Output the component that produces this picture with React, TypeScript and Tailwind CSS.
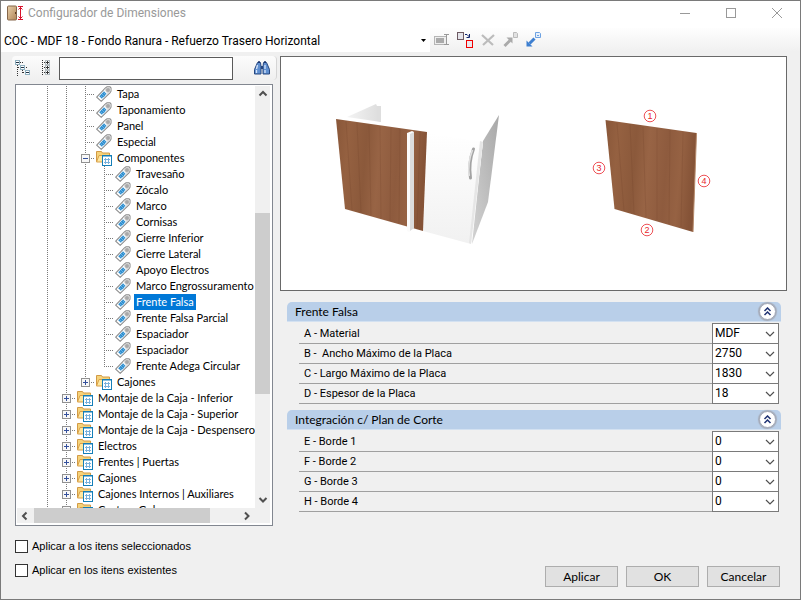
import { useState } from "react";

type Row = {
  label: string;
  level: number;
  kind: "tag" | "folder";
  state?: "open" | "closed";
  last?: boolean;
};

const tag = (label: string, level: number, last = false): Row => ({ label, level, kind: "tag", last });
const folder = (label: string, level: number, state: "open" | "closed" = "closed", last = false): Row => ({
  label,
  level,
  kind: "folder",
  state,
  last,
});

const rows: Row[] = [
  tag("Tapa", 3),
  tag("Taponamiento", 3),
  tag("Panel", 3),
  tag("Especial", 3),
  folder("Componentes", 3, "open"),
  tag("Travesaño", 4),
  tag("Zócalo", 4),
  tag("Marco", 4),
  tag("Cornisas", 4),
  tag("Cierre Inferior", 4),
  tag("Cierre Lateral", 4),
  tag("Apoyo Electros", 4),
  tag("Marco Engrossuramento", 4),
  tag("Frente Falsa", 4),
  tag("Frente Falsa Parcial", 4),
  tag("Espaciador", 4),
  tag("Espaciador", 4),
  tag("Frente Adega Circular", 4, true),
  folder("Cajones", 3, "closed", true),
  folder("Montaje de la Caja - Inferior", 2),
  folder("Montaje de la Caja - Superior", 2),
  folder("Montaje de la Caja - Despensero", 2),
  folder("Electros", 2),
  folder("Frentes | Puertas", 2),
  folder("Cajones", 2),
  folder("Cajones Internos | Auxiliares", 2),
  folder("Costura Gola", 2),
];

const groups = [
  {
    title: "Frente Falsa",
    fields: [
      { label: "A - Material", value: "MDF" },
      { label: "B -  Ancho Máximo de la Placa", value: "2750" },
      { label: "C - Largo Máximo de la Placa", value: "1830" },
      { label: "D - Espesor de la Placa", value: "18" },
    ],
  },
  {
    title: "Integración c/ Plan de Corte",
    fields: [
      { label: "E - Borde 1", value: "0" },
      { label: "F - Borde 2", value: "0" },
      { label: "G - Borde 3", value: "0" },
      { label: "H - Borde 4", value: "0" },
    ],
  },
];

function AppIcon() {
  return (
    <svg width="17" height="16" viewBox="0 0 17 16">
      <defs>
        <linearGradient id="door" x1="0" y1="0" x2="1" y2="1">
          <stop offset="0" stopColor="#e8d0aa" />
          <stop offset="1" stopColor="#b08558" />
        </linearGradient>
      </defs>
      <rect x="0.500" y="1" width="9" height="14" rx="1" fill="url(#door)" stroke="#85664a" />
      <path d="M8.500 7v2" stroke="#5b3d22" />
      <path d="M11 1.500h5M11 14.500h5M13.500 2v12M11.500 4.500l2-2 2 2M11.500 11.500l2 2 2-2" stroke="#d8112b" fill="none" />
    </svg>
  );
}

function TagIcon() {
  return (
    <svg width="16" height="16" viewBox="0 0 16 16" className="shrink-0">
      <path d="M0.700 11.200L9.200 2.200L11 0.900H14L15 2V5.200L13.900 7L5.200 15.300Z" fill="#fff" stroke="#8c8c8c" strokeWidth="1.100" />
      <path d="M8.300 3.500L11 1.500H13.800L14.400 2.400V5L13.400 6.600L11.600 8Z" fill="#d9d9d9" />
      <rect x="11" y="3" width="2" height="2" fill="#fff" stroke="#777" strokeWidth="0.800" />
      <path d="M3.200 10.300L8 5.200L10.700 8L5.900 12.800Z" fill="#2f8fd0" />
      <path d="M4.500 9.500l3 3M6 8l3 3M7.500 6.500l2.600 2.600" stroke="#8cc6ec" strokeWidth="0.600" />
    </svg>
  );
}

function FolderIcon() {
  return (
    <svg width="16" height="16" viewBox="0 0 16 16" className="shrink-0">
      <path d="M0.500 11.500V1.500H5.500L6.500 3H13.500V11.500Z" fill="#f5d37b" stroke="#d29a45" />
      <path d="M0.500 12L3 5.500H14V12Z" fill="#fde7a0" stroke="#d9a04a" />
      <rect x="6.500" y="5.500" width="9" height="10" fill="#fff" stroke="#157fb8" />
      <path d="M6 6h10" stroke="#157fb8" />
      <path d="M8 9.500h6M8 12.500h6M9.500 8v6M12.500 8v6" stroke="#79b1dc" />
    </svg>
  );
}

function Guide({ horizontal = false, half = false }: { horizontal?: boolean; half?: boolean }) {
  return (
    <svg width="19" height="16" viewBox="0 0 19 16" className="shrink-0" shapeRendering="crispEdges">
      <path d={half ? "M9.500 0V9" : "M9.500 0V16"} stroke="#7a7a7a" strokeDasharray="1 1" />
      {horizontal && <path d="M9 8.500H19" stroke="#7a7a7a" strokeDasharray="1 1" />}
    </svg>
  );
}

function Expander({ open, half }: { open: boolean; half: boolean }) {
  return (
    <button type="button" aria-label={open ? "Contraer" : "Expandir"} className="block h-4 w-[19px] shrink-0">
      <svg width="19" height="16" viewBox="0 0 19 16" shapeRendering="crispEdges">
        <path d={half ? "M9.500 0V9" : "M9.500 0V16"} stroke="#7a7a7a" strokeDasharray="1 1" />
        <path d="M9 8.500H19" stroke="#7a7a7a" strokeDasharray="1 1" />
        <rect x="5.500" y="4.500" width="8" height="8" fill="#f8f8f8" stroke="#919191" />
        <path d={open ? "M7 8.500H12" : "M7 8.500H12M9.500 6V11"} stroke="#34509c" />
      </svg>
    </button>
  );
}

function TreeRow({ row, selected, onSelect }: { row: Row; selected: boolean; onSelect: () => void }) {
  const plain = Array.from({ length: row.level - 1 });
  return (
    <li role="treeitem" aria-selected={selected} className="flex h-4 items-center">
      {plain.map((_, i) => (
        <Guide key={i} />
      ))}
      {row.kind === "folder" ? (
        <Expander open={row.state === "open"} half={!!row.last} />
      ) : (
        <Guide horizontal half={!!row.last} />
      )}
      <span className="ml-px flex">{row.kind === "tag" ? <TagIcon /> : <FolderIcon />}</span>
      <button
        type="button"
        onClick={onSelect}
        className={
          "ml-[3px] h-4 px-0.5 leading-4 whitespace-nowrap " + (selected ? "bg-[#0078d7] text-white" : "text-black")
        }
      >
        {row.label}
      </button>
    </li>
  );
}

function ScrollArrow({ dir }: { dir: "up" | "down" | "left" | "right" }) {
  const d = {
    up: "M4.500 9.500L8 6L11.500 9.500",
    down: "M4.500 6L8 9.500L11.500 6",
    left: "M9.500 4.500L6 8L9.500 11.500",
    right: "M6 4.500L9.500 8L6 11.500",
  }[dir];
  return (
    <button type="button" aria-label={dir} className="block size-4 shrink-0">
      <svg width="16" height="16" viewBox="0 0 16 16">
        <path d={d} fill="none" stroke="#505050" strokeWidth="2" />
      </svg>
    </button>
  );
}

function Tree() {
  const [selected, setSelected] = useState(13);
  return (
    <div className="grid min-h-0 flex-1 grid-cols-[minmax(0,1fr)_15px] grid-rows-[minmax(0,1fr)_15px] border border-[#828790] bg-white p-px pr-0.5 pb-0.5">
      <ul role="tree" className="overflow-hidden pl-[21px] font-[Lato,sans-serif]">
        {rows.map((row, i) => (
          <TreeRow key={i} row={row} selected={i === selected} onSelect={() => setSelected(i)} />
        ))}
      </ul>
      <div className="flex flex-col items-center bg-[#f0f0f0]">
        <ScrollArrow dir="up" />
        <div className="flex w-full flex-1 flex-col">
          <div className="flex-[111]" />
          <div className="flex-[180] bg-[#cdcdcd]" />
          <div className="flex-[98]" />
        </div>
        <ScrollArrow dir="down" />
      </div>
      <div className="flex items-center bg-[#f0f0f0]">
        <ScrollArrow dir="left" />
        <div className="flex h-full flex-1">
          <div className="flex-[1]" />
          <div className="flex-[175] bg-[#cdcdcd]" />
          <div className="flex-[29]" />
        </div>
        <ScrollArrow dir="right" />
      </div>
      <div className="bg-[#f0f0f0]" />
    </div>
  );
}

function SearchBar() {
  return (
    <div className="-ml-[3px] flex h-6 items-center rounded-sm border-r border-[#d5d5d5] bg-linear-to-b from-[#fcfcfc] to-[#f0f0f0] pl-[3px]">
      <button type="button" aria-label="Contraer todo" className="size-4">
        <svg width="16" height="16" viewBox="0 0 16 16" shapeRendering="crispEdges">
          <path d="M2.500 5V16M7.500 10V14M5 2.500H8M3 7.500H5M9 7.500H12M8 12.500H10" stroke="#333" strokeDasharray="1 1" />
          <rect x="0.500" y="0.500" width="4" height="4" fill="#fff" stroke="#8fb0c0" />
          <rect x="5.500" y="5.500" width="4" height="4" fill="#fff" stroke="#8fb0c0" />
          <rect x="10.500" y="10.500" width="4" height="4" fill="#fff" stroke="#8fb0c0" />
          <path d="M1 2.500h3M6 7.500h3M11 12.500h3" stroke="#234" />
        </svg>
      </button>
      <button type="button" aria-label="Expandir todo" className="ml-2 size-4">
        <svg width="16" height="16" viewBox="0 0 16 16" shapeRendering="crispEdges">
          <path d="M3.500 0V16M5 2.500H7M5 7.500H7M5 12.500H7" stroke="#333" strokeDasharray="1 1" />
          <rect x="6.500" y="0.500" width="4" height="4" fill="#fff" stroke="#b4bcc0" />
          <rect x="6.500" y="5.500" width="4" height="4" fill="#fff" stroke="#b4bcc0" />
          <rect x="6.500" y="10.500" width="4" height="4" fill="#fff" stroke="#b4bcc0" />
          <path d="M7 2.500h3M7 7.500h3M7 12.500h3M8.500 1v3M8.500 6v3M8.500 11v3" stroke="#333" />
        </svg>
      </button>
      <input aria-label="Buscar" className="ml-1 h-[23px] min-w-0 flex-1 border border-[#5a5a5a] bg-white px-1 outline-none" />
      <button type="button" aria-label="Buscar siguiente" className="mr-1.5 ml-[21px] size-4">
        <svg width="16" height="16" viewBox="0 0 16 16">
          <path d="M3.500 2.500h3l.5 4v7.500H.500V9.500z" fill="#5f8fd0" stroke="#26467f" />
          <path d="M12.500 2.500h-3L9 6.500v7.500h6.500V9.500z" fill="#5f8fd0" stroke="#26467f" />
          <path d="M7 6h2v3H7z" fill="#26467f" />
          <path d="M3.500 5L2.500 9M11 5v4M2.500 10v3M11 10v3" stroke="#d6e5fa" strokeWidth="1.300" />
          <path d="M4 2h2M10 2h2" stroke="#16316b" strokeWidth="1.500" />
        </svg>
      </button>
    </div>
  );
}

function Preview() {
  const marks = [
    { n: "1", x: 369, y: 59 },
    { n: "2", x: 366, y: 173 },
    { n: "3", x: 318, y: 111 },
    { n: "4", x: 423, y: 124 },
  ];
  return (
    <div className="border border-[#696969] bg-white">
      <svg viewBox="0 0 505 233" className="block w-full" role="img" aria-label="Frente Falsa">
        <defs>
          <linearGradient id="wood" x1="0" x2="1" y1="0" y2="0.100">
            <stop offset="0" stopColor="#895739" />
            <stop offset="0.150" stopColor="#956141" />
            <stop offset="0.350" stopColor="#8b593b" />
            <stop offset="0.500" stopColor="#986445" />
            <stop offset="0.700" stopColor="#8e5b3e" />
            <stop offset="0.850" stopColor="#966243" />
            <stop offset="1" stopColor="#855337" />
          </linearGradient>
          <linearGradient id="side" x1="1" x2="0" y1="0" y2="1">
            <stop offset="0" stopColor="#a8a8a8" />
            <stop offset="1" stopColor="#d2d2d2" />
          </linearGradient>
          <linearGradient id="front" x1="0" x2="0" y1="0" y2="1">
            <stop offset="0" stopColor="#ffffff" />
            <stop offset="1" stopColor="#f1f1f1" />
          </linearGradient>
          <linearGradient id="back" x1="0" x2="1" y1="0" y2="0">
            <stop offset="0" stopColor="#f4f4f4" />
            <stop offset="1" stopColor="#dcdcdc" />
          </linearGradient>
        </defs>
        <path d="M66 60L95 47L96 49L100 49V65Z" fill="url(#back)" />
        <path d="M96 49L100 49V65L96 64Z" fill="#dedede" />
        <path d="M202 84L218 58L207 145L191 187Z" fill="url(#side)" />
        <path d="M147 76L202 85L190 187L142 174Z" fill="url(#front)" />
        <path d="M202 85L190 187L188 186L199 84Z" fill="#e6e6e6" />
        <path d="M55 62L146 75L142 174L64 152Z" fill="url(#wood)" />
        <path d="M65 64L71 153M76 66L80 156M88 68L90 159M99 69L100 162M110 71L109 164M119 72L118 166M139 75L136 172" stroke="#6f4028" strokeWidth="0.600" opacity="0.350" />
        <path d="M126 76L131 74L133 75V171L128 175L126 174Z" fill="#fbfbfb" />
        <path d="M129 77L133 75V171L129 174Z" fill="#dcdcdc" />
        <path d="M192.500 92C189 101 188 111 189.500 121" fill="none" stroke="#a3a3a3" strokeWidth="3" strokeLinecap="round" />
        <path d="M191.500 93C188 102 187 111 188.300 119" fill="none" stroke="#e0e0e0" strokeWidth="1.600" />
        <path d="M324.500 63L415.500 76L412 175L333.500 152Z" fill="url(#wood)" />
        <path d="M336 66L343 154M349 67L353 157M362 70L365 160M376 71L376 163M389 73L388 167M402 75L400 170" stroke="#6f4028" strokeWidth="0.600" opacity="0.350" />
        <path d="M415.500 76L412 175" stroke="#b78b6c" />
        {marks.map((m) => (
          <g key={m.n}>
            <circle cx={m.x} cy={m.y} r="5.800" fill="#fff" stroke="#e8262c" strokeWidth="0.800" />
            <text x={m.x} y={m.y + 3} textAnchor="middle" fontSize="9" fill="#e8262c">
              {m.n}
            </text>
          </g>
        ))}
      </svg>
    </div>
  );
}

function Group({ title, fields }: { title: string; fields: { label: string; value: string }[] }) {
  return (
    <section>
      <header className="flex h-5 items-center justify-between rounded-t-[5px] border-b border-[#d3e1f1] bg-[#b9cfe9] pr-[5px] pl-2">
        <h2 className="font-[Lato,sans-serif] text-[12px] leading-4">{title}</h2>
        <button
          type="button"
          aria-label={"Contraer " + title}
          className="flex size-[17px] items-center justify-center rounded-full border border-[#a2a9b8] bg-white shadow-[0_0_1px_1px_#a5abb8]"
        >
          <svg width="9" height="9" viewBox="0 0 9 9">
            <path d="M1.500 4L4.500 1L7.500 4M1.500 8L4.500 5L7.500 8" fill="none" stroke="#1f3273" strokeWidth="1.500" />
          </svg>
        </button>
      </header>
      <div className="mt-0.5 mr-0.5 ml-3">
        {fields.map((f, i) => (
          <div key={f.label} className="flex h-5 items-stretch">
            <label htmlFor={title + i} className="flex flex-1 items-center border-b border-[#a0a0a0] pt-0.5 pl-[5px] whitespace-pre">
              {f.label}
            </label>
            <div className="relative -mt-px w-[67px]">
              <select
                id={title + i}
                defaultValue={f.value}
                className="block h-[21px] w-full appearance-none border border-[#7a7a7a] bg-white pr-4 pb-px pl-0.5 text-[12px] leading-4 outline-none"
              >
                <option>{f.value}</option>
              </select>
              <svg width="10" height="6" viewBox="0 0 10 6" className="pointer-events-none absolute top-2 right-1">
                <path d="M1 1L5 5L9 1" fill="none" stroke="#505050" strokeWidth="1.200" />
              </svg>
            </div>
          </div>
        ))}
      </div>
    </section>
  );
}

function Toolbar() {
  return (
    <div className="flex h-6 shrink-0 items-center bg-linear-to-b from-[#fefefe] to-[#f0f0f0]">
      <div className="relative h-full w-[429px] shrink-0 bg-white">
        <select
          aria-label="Configuración"
          className="h-full w-full appearance-none bg-transparent pt-0.5 pl-[3px] font-[Roboto,sans-serif] text-[12px] outline-none"
        >
          <option>COC - MDF 18 - Fondo Ranura - Refuerzo Trasero Horizontal</option>
        </select>
        <svg width="5" height="3" viewBox="0 0 5 3" className="pointer-events-none absolute top-[11px] right-1">
          <path d="M0 0H5L2.500 3Z" fill="#000" />
        </svg>
      </div>
      <div className="flex items-center gap-[7px] pl-1">
        <button type="button" aria-label="Renombrar">
          <svg width="16" height="16" viewBox="0 0 16 16">
            <rect x="0.500" y="4.500" width="12" height="8" fill="#eee" stroke="#b5b5b5" />
            <rect x="2" y="6" width="8" height="5" fill="#aaa" />
            <path d="M10 2.500h5M10 12.500h5M12.500 3v10" stroke="#999" />
          </svg>
        </button>
        <button type="button" aria-label="Reemplazar">
          <svg width="16" height="16" viewBox="0 0 16 16">
            <rect x="0.500" y="0.500" width="6" height="7" fill="#e4e4ea" stroke="#6d5a62" />
            <rect x="9.500" y="8.500" width="6" height="7" fill="#e9e9ee" stroke="#f00000" />
            <path d="M8 2.500h2l2.500 2.500M12.500 2v3.500H9.500" stroke="#10246e" fill="none" />
          </svg>
        </button>
        <button type="button" aria-label="Eliminar">
          <svg width="16" height="16" viewBox="0 0 16 16">
            <path d="M2 3l11 10M14 3L3 13" stroke="#bcbcbc" strokeWidth="2.200" />
          </svg>
        </button>
        <button type="button" aria-label="Exportar">
          <svg width="16" height="16" viewBox="0 0 16 16">
            <path d="M1.500 14L7 8.500" stroke="#aaa" strokeWidth="3" />
            <path d="M3.500 5.500H9.500V11.500Z" fill="#aaa" />
            <path d="M10.500 0.500h3l1 1v4h-4z" fill="#e2e2e2" stroke="#bbb" />
          </svg>
        </button>
        <button type="button" aria-label="Importar">
          <svg width="16" height="16" viewBox="0 0 16 16">
            <path d="M3.500 11.500L8.500 6.500" stroke="#3d7fd0" strokeWidth="3" />
            <path d="M0.500 8.500V14.500H6.500Z" fill="#3d7fd0" />
            <path d="M9.500 0.500h4l1 1v4h-5z" fill="#e6f0fc" stroke="#6da2e2" />
            <path d="M11 3.500h2" stroke="#6da2e2" />
          </svg>
        </button>
      </div>
    </div>
  );
}

function TitleBar() {
  return (
    <div className="flex h-[27px] shrink-0 items-center bg-white pr-[17px] pl-[6px]">
      <div className="flex flex-1 items-center gap-1 pb-1">
        <AppIcon />
        <h1 className="font-[Roboto,sans-serif] text-[12px] leading-4 text-[#999]">Configurador de Dimensiones</h1>
      </div>
      <div className="flex items-center gap-[34px] pb-1">
        <button type="button" aria-label="Minimizar">
          <svg width="12" height="12" viewBox="0 0 12 12">
            <path d="M1 6.500H11" stroke="#999" />
          </svg>
        </button>
        <button type="button" aria-label="Maximizar">
          <svg width="12" height="12" viewBox="0 0 12 12">
            <rect x="1.500" y="1.500" width="9" height="9" fill="none" stroke="#999" />
          </svg>
        </button>
        <button type="button" aria-label="Cerrar">
          <svg width="12" height="12" viewBox="0 0 12 12">
            <path d="M1 1L11 11M11 1L1 11" stroke="#999" />
          </svg>
        </button>
      </div>
    </div>
  );
}

export default function App() {
  return (
    <div className="flex h-screen min-h-[600px] flex-col border border-[#7a7a7a] bg-[#f0f0f0] font-['Liberation_Sans',Arial,sans-serif] text-[11px] text-black">
      <TitleBar />
      <Toolbar />
      <main className="flex min-h-0 flex-1 gap-[7px] pt-1 pr-[13px] pl-3.5">
        <div className="flex w-[258px] shrink-0 flex-col gap-1">
          <div className="-mr-1">
            <SearchBar />
          </div>
          <Tree />
        </div>
        <div className="flex min-w-0 flex-1 flex-col">
          <Preview />
          <div className="mt-[11px] mr-1.5 ml-[7px] flex flex-col gap-1.5 font-[Roboto,sans-serif]">
            {groups.map((g) => (
              <Group key={g.title} {...g} />
            ))}
          </div>
        </div>
      </main>
      <footer className="flex shrink-0 items-end justify-between pt-3 pr-5 pb-3 pl-3.5">
        <div className="flex flex-col gap-2 pb-[9px]">
          {["Aplicar a los itens seleccionados", "Aplicar en los itens existentes"].map((t) => (
            <label key={t} className="flex h-4 items-center gap-1">
              <input type="checkbox" className="size-[13px] appearance-none border border-[#333] bg-white checked:bg-[#0078d7]" />
              {t}
            </label>
          ))}
        </div>
        <div className="flex gap-2">
          {["Aplicar", "OK", "Cancelar"].map((t) => (
            <button
              key={t}
              type="button"
              className="h-[21px] w-[73px] border border-[#adadad] bg-[#e1e1e1] text-center font-[Lato,sans-serif] text-[12px] leading-4"
            >
              {t}
            </button>
          ))}
        </div>
      </footer>
    </div>
  );
}
